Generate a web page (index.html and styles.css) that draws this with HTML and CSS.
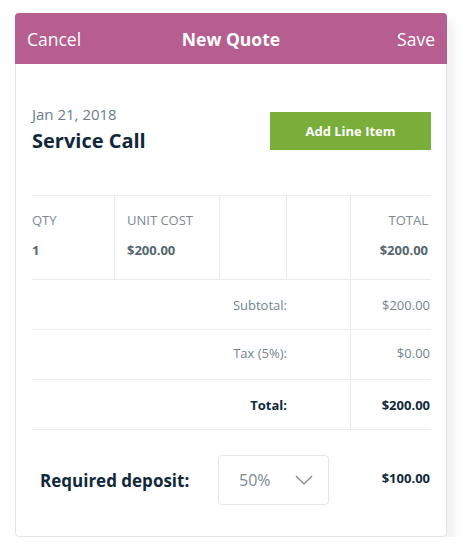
FILE: index.html
```html
<!DOCTYPE html>
<html lang="en">
<head>
    <meta charset="UTF-8">
    <meta name="viewport" content="width=device-width, initial-scale=1.0">
    <title>New Quote</title>
    <link rel="stylesheet" href="styles.css">
</head>
<body>
    <div class="card">
        <div class="topbar">
            <span class="topbar-link">Cancel</span>
            <span class="topbar-title">New Quote</span>
            <span class="topbar-link topbar-save">Save</span>
        </div>

        <div class="content">
            <div class="intro">
                <div>
                    <p class="date">Jan 21, 2018</p>
                    <h1 class="job-title">Service Call</h1>
                </div>
                <button class="add-btn">Add Line Item</button>
            </div>

            <!-- Positionen -->
            <div class="items">
                <div class="cell">
                    <span class="label">QTY</span>
                    <span class="value">1</span>
                </div>
                <div class="cell">
                    <span class="label">UNIT COST</span>
                    <span class="value">$200.00</span>
                </div>
                <div class="cell"></div>
                <div class="cell"></div>
                <div class="cell cell-total">
                    <span class="label">TOTAL</span>
                    <span class="value">$200.00</span>
                </div>
            </div>

            <!-- Summen -->
            <div class="sum-row">
                <span class="sum-label">Subtotal:</span>
                <span class="sum-value">$200.00</span>
            </div>
            <div class="sum-row sum-row-tax">
                <span class="sum-label">Tax (5%):</span>
                <span class="sum-value">$0.00</span>
            </div>
            <div class="sum-row sum-row-total">
                <span class="sum-label">Total:</span>
                <span class="sum-value">$200.00</span>
            </div>

            <div class="deposit">
                <span class="deposit-label">Required deposit:</span>
                <div class="select">
                    <span>50%</span>
                    <svg width="18" height="10" viewBox="0 0 18 10">
                        <polyline points="1,1 9,9 17,1" fill="none" stroke="#7d8b96" stroke-width="1.3"/>
                    </svg>
                </div>
                <span class="deposit-value">$100.00</span>
            </div>
        </div>
    </div>
</body>
</html>
```

FILE: styles.css
```css
body {
    font-family: "Open Sans", Arial, sans-serif;
    background-color: #fff;
    margin: 0;
    padding: 13px 0 0 15px;
}

.card {
    width: 432px;
    height: 524px;
    box-sizing: border-box;
    background-color: #fff;
    border: 1px solid #e4e4e4;
    border-radius: 4px;
    box-shadow: 8px 8px 10px rgba(0, 0, 0, 0.06);
}

.topbar {
    display: grid;
    grid-template-columns: 1fr auto 1fr;
    align-items: center;
    height: 51px;
    margin: -1px -1px 0;
    padding: 0 12px;
    background-color: #b65e8f;
    border-radius: 4px 4px 0 0;
    color: #fff;
    font-size: 17.5px;
}

.topbar-title {
    font-weight: 700;
}

.topbar-save {
    text-align: right;
}

.content {
    padding: 0 15px 0 16px;
}

.intro {
    display: flex;
    justify-content: space-between;
    align-items: flex-start;
    padding: 40px 0 41px;
}

.date {
    margin: 0;
    font-size: 15px;
    line-height: 20px;
    color: #6d7c87;
}

.job-title {
    margin: 4px 0 0;
    font-size: 20px;
    line-height: 26px;
    color: #10293a;
}

.add-btn {
    width: 161px;
    height: 38px;
    margin-top: 8px;
    border: none;
    background-color: #79ae3a;
    color: #fff;
    font-family: inherit;
    font-size: 13px;
    font-weight: 700;
}

.items {
    display: grid;
    grid-template-columns: 82px 105px 67px 64px 81px;
    border-top: 1px solid #ebebeb;
    border-bottom: 1px solid #ebebeb;
}

.cell {
    display: flex;
    flex-direction: column;
    gap: 12px;
    height: 83px;
    box-sizing: border-box;
    padding: 15px 0 0 12px;
    border-left: 1px solid #ebebeb;
}

.cell:first-child {
    padding-left: 0;
    border-left: none;
}

.cell-total {
    align-items: flex-end;
    padding: 15px 3px 0 0;
}

.label {
    font-size: 13px;
    line-height: 18px;
    color: #7b8994;
}

.value {
    font-size: 13px;
    line-height: 18px;
    font-weight: 700;
    color: #56666f;
}

.sum-row {
    display: grid;
    grid-template-columns: 318px 81px;
    height: 50px;
    box-sizing: border-box;
    border-bottom: 1px solid #ebebeb;
    font-size: 13px;
    color: #74838e;
}

.sum-label,
.sum-value {
    display: flex;
    align-items: center;
    justify-content: flex-end;
}

.sum-label {
    padding-right: 63px;
}

.sum-value {
    padding-right: 1px;
    border-left: 1px solid #ebebeb;
}

.sum-row-tax .sum-label,
.sum-row-tax .sum-value {
    padding-bottom: 3px;
}

.sum-row-total {
    font-weight: 700;
    color: #10293a;
}

.deposit {
    display: flex;
    align-items: center;
    padding: 25px 1px 0 8px;
}

.deposit-label {
    width: 178px;
    font-size: 17px;
    font-weight: 700;
    color: #10293a;
}

.select {
    display: flex;
    justify-content: space-between;
    align-items: center;
    width: 111px;
    height: 50px;
    box-sizing: border-box;
    padding: 0 15px 0 20px;
    border: 1px solid #e6e6e6;
    border-radius: 4px;
    font-size: 16px;
    color: #7b8994;
}

.deposit-value {
    flex: 1;
    margin-bottom: 4px;
    text-align: right;
    font-size: 13px;
    font-weight: 700;
    color: #10293a;
}
```
